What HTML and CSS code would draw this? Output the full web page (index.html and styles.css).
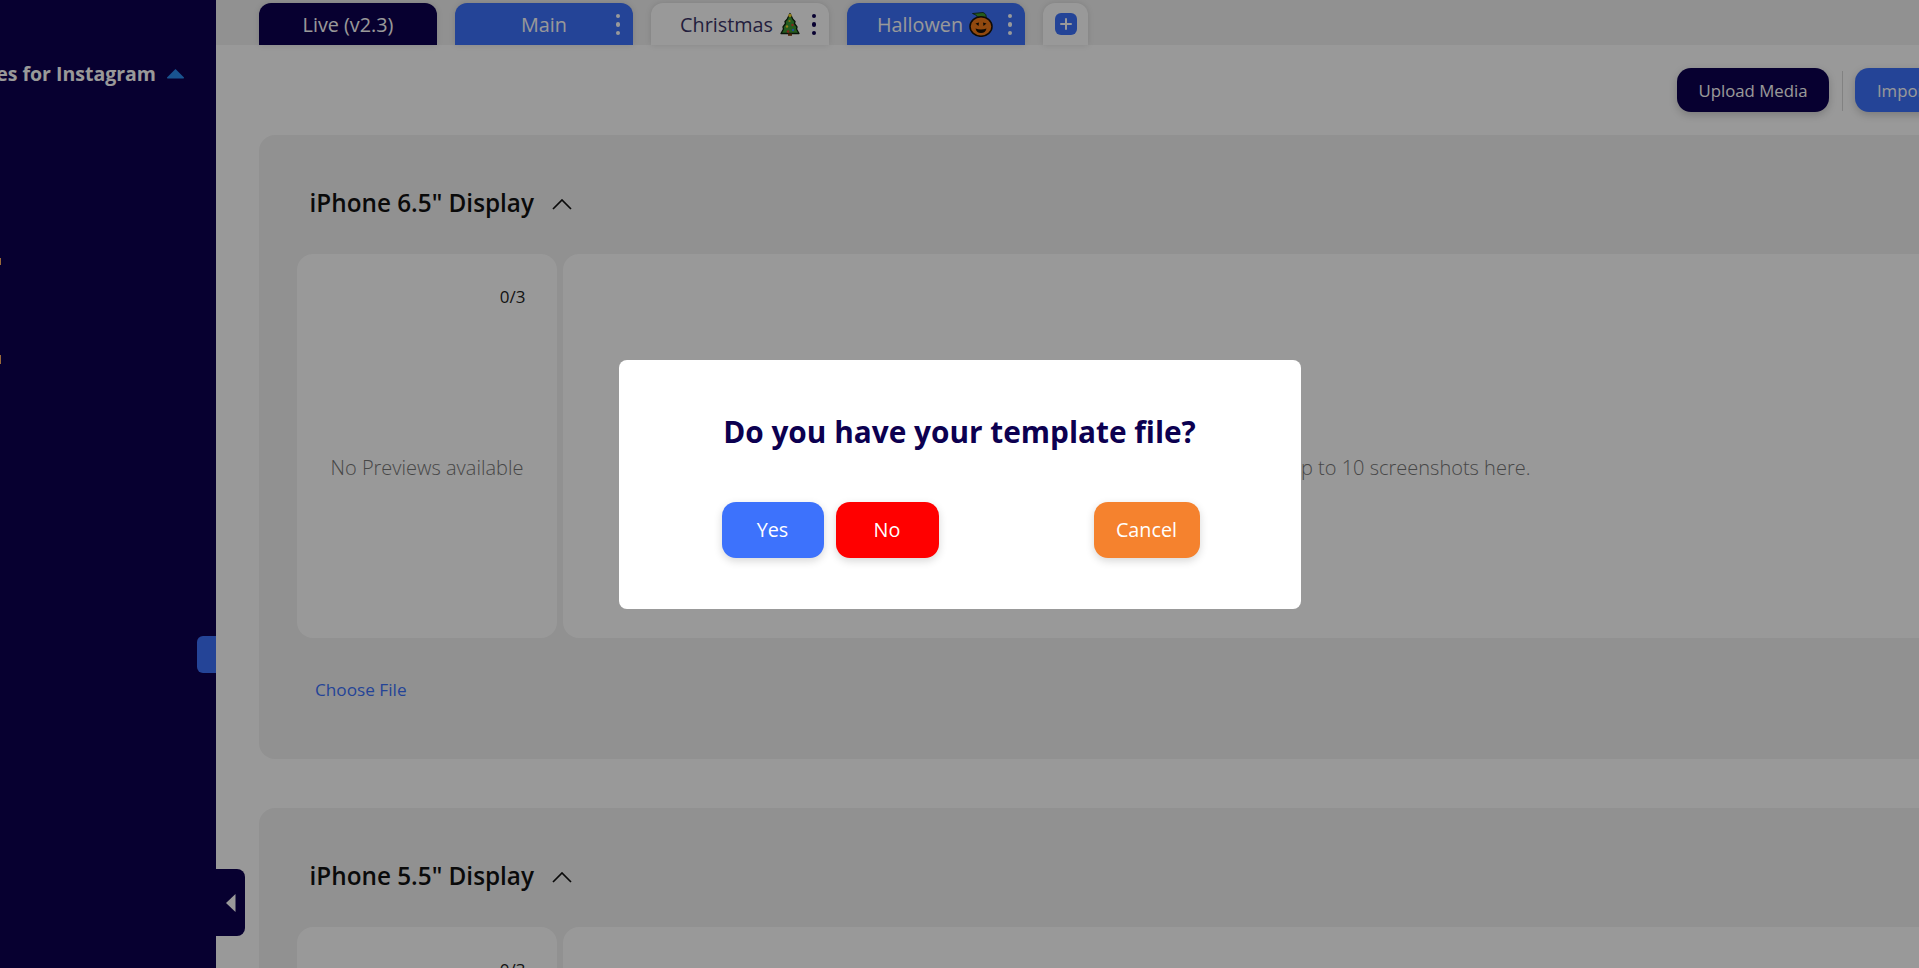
FILE: index.html
```html
<!DOCTYPE html>
<html lang="en">
<head>
<meta charset="utf-8">
<title>Templates for Instagram</title>
<link rel="stylesheet" href="styles.css">
</head>
<body>
<div class="page">
  <aside class="sidebar">
    <div class="side-title">
      <span class="side-title-text">Templates for Instagram</span>
      <svg class="side-caret" width="19" height="11" viewBox="0 0 19 11"><path d="M9.5 1 L18 9.5 Q18.5 10.5 17 10.5 L2 10.5 Q.5 10.5 1 9.5 Z" fill="#2a8cf0"/></svg>
    </div>
    <span class="side-dot side-dot-a"></span>
    <span class="side-dot side-dot-b"></span>
    <span class="side-flag"></span>
  </aside>
  <button class="collapse" aria-label="Collapse">
    <svg width="10" height="18" viewBox="0 0 10 18"><path d="M9.5 0 L0 9 L9.5 18 Z" fill="#fff"/></svg>
  </button>
  <main class="main">
    <nav class="tabs">
      <div class="tab tab-live">Live (v2.3)</div>
      <div class="tab tab-blue">Main<span class="dots"><i></i><i></i><i></i></span></div>
      <div class="tab tab-white">Christmas
        <svg class="emoji" width="20" height="24" viewBox="0 0 20 24"><path d="M10 1.500 L13 7.500 L15 9.500 L14.500 11.500 L17 15 L16.500 17 L19 21.500 L1 21.500 L3.500 17 L3 15 L5.500 11.500 L5 9.500 L7 7.500 Z" fill="#3c9a34" stroke="#10240e" stroke-width="1.300" stroke-linejoin="round"/><rect x="8" y="21.500" width="4" height="2.300" fill="#7a3b12"/><circle cx="10" cy="3.500" r="1.700" fill="#f6d32d"/><circle cx="9.500" cy="9" r="1.100" fill="#e8b32d"/><circle cx="12.500" cy="13" r="1.200" fill="#e03b2c"/><circle cx="7" cy="14.500" r="1.200" fill="#f6d32d"/><circle cx="13" cy="18" r="1.200" fill="#3a7bf0"/><circle cx="8" cy="19.500" r="1.300" fill="#e03b2c"/></svg>
        <span class="dots dots-dark"><i></i><i></i><i></i></span></div>
      <div class="tab tab-blue tab-halloween">Hallowen
        <svg class="emoji" width="24" height="25" viewBox="0 0 24 25"><path d="M9 6 Q8.500 3 3.500 1.500 L14 .5 Q18 2 17 6 Z" fill="#3f9a2e" stroke="#10240e" stroke-width=".8"/><ellipse cx="12" cy="14.500" rx="11" ry="9.800" fill="#f27a1a" stroke="#1a1208" stroke-width="1.500"/><path d="M6.500 11.500 L10 10.500 L9.500 14 Z M17.500 11.500 L14 10.500 L14.500 14 Z" fill="#1a1208"/><path d="M6.500 16.500 Q12 18.500 17.500 16.500 Q16.500 21 12 21 Q7.500 21 6.500 16.500 Z" fill="#1a1208"/></svg>
        <span class="dots"><i></i><i></i><i></i></span></div>
      <div class="tab tab-add"><span class="add-btn"><svg width="12" height="12" viewBox="0 0 12 12"><path d="M6 1 V11 M1 6 H11" stroke="#fff" stroke-width="2" stroke-linecap="round"/></svg></span></div>
    </nav>
    <div class="toolbar">
      <button class="tool tool-navy">Upload Media</button>
      <span class="tool-sep"></span>
      <button class="tool tool-blue">Import Media</button>
    </div>
    <section class="device">
      <header class="device-head">
        <h2>iPhone 6.5" Display</h2>
        <svg width="20" height="11" viewBox="0 0 20 11"><path d="M1 10 L10 1 L19 10" fill="none" stroke="#111" stroke-width="1.700"/></svg>
      </header>
      <div class="device-row">
        <div class="card card-preview"><span class="count">0/3</span><p class="empty">No Previews available</p></div>
        <div class="card card-drop"><p class="empty">Drag and drop up to 10 screenshots here.</p></div>
      </div>
      <a class="choose">Choose File</a>
    </section>
    <section class="device">
      <header class="device-head">
        <h2>iPhone 5.5" Display</h2>
        <svg width="20" height="11" viewBox="0 0 20 11"><path d="M1 10 L10 1 L19 10" fill="none" stroke="#111" stroke-width="1.700"/></svg>
      </header>
      <div class="device-row">
        <div class="card card-preview"><span class="count">0/3</span><p class="empty">No Previews available</p></div>
        <div class="card card-drop"><p class="empty">Drag and drop up to 10 screenshots here.</p></div>
      </div>
      <a class="choose">Choose File</a>
    </section>
  </main>
</div>
<div class="overlay">
  <div class="modal">
    <h1>Do you have your template file?</h1>
    <div class="modal-actions">
      <div class="modal-group">
        <button class="mbtn mbtn-yes">Yes</button>
        <button class="mbtn mbtn-no">No</button>
      </div>
      <button class="mbtn mbtn-cancel">Cancel</button>
    </div>
  </div>
</div>
</body>
</html>
```

FILE: styles.css
```css
* { box-sizing: border-box; }
html, body { margin: 0; height: 100%; overflow: hidden; }
body { font-family: "Open Sans", "Noto Sans", sans-serif; background: #fff; color: #111; }
button { font: inherit; border: 0; cursor: pointer; }

.page { display: flex; width: 2216px; height: 968px; position: relative; overflow: hidden; }

.sidebar { flex: 0 0 216px; height: 968px; background: #0c0050; display: flex; flex-direction: column; overflow: hidden; }
.side-title { height: 30px; margin-top: 58px; padding-right: 31px; display: flex; justify-content: flex-end; align-items: center; gap: 10px; white-space: nowrap; }
.side-title-text { color: #fff; font-size: 19.500px; font-weight: 700; flex: none; }
.side-caret { flex: none; }
.side-dot { width: 1px; background: #ffb060; flex: none; }
.side-dot-a { height: 7px; margin-top: 170px; }
.side-dot-b { height: 9px; margin-top: 90px; }
.side-flag { flex: none; align-self: flex-end; width: 19px; height: 37px; margin-top: 272px; background: #3d72fc; border-radius: 6px 0 0 6px; }

.collapse { position: absolute; left: 216px; top: 869px; z-index: 2; width: 29px; height: 67px; padding: 0 0 0 1px; background: #0c0050; border-radius: 0 8px 8px 0; display: flex; align-items: center; justify-content: center; }

.main { flex: 1; min-width: 0; }

.tabs { height: 45px; padding: 3px 0 0 43px; background: #f2f2f2; display: flex; gap: 18px; }
.tab { position: relative; flex: 0 0 178px; height: 42px; border-radius: 12px 12px 0 0; display: flex; align-items: center; justify-content: center; gap: 7px; font-size: 19.800px; box-shadow: 0 0 6px rgba(0,0,0,.12); }
.tab-live { background: #0c0050; color: #fff; }
.tab-blue { background: #3d72fc; color: #fff; }
.tab-white { background: #fff; color: #3b3468; }
.tab-add { flex-basis: 45px; background: #fff; }
.add-btn { width: 22px; height: 22px; border-radius: 6px; background: #3d72fc; display: flex; align-items: center; justify-content: center; }
.emoji { flex: none; }
.tab-halloween { gap: 6px; padding-right: 2px; }
.dots { position: absolute; right: 13px; top: 10.500px; display: flex; flex-direction: column; gap: 4px; }
.dots i { display: block; width: 4.500px; height: 4.500px; border-radius: 50%; background: #fff; }
.dots-dark i { background: #0c0050; }

.toolbar { height: 90px; padding: 23px 211px 0 0; display: flex; justify-content: flex-end; align-items: flex-start; }
.tool { height: 44px; border-radius: 14px; color: #fff; font-size: 16.800px; box-shadow: 0 3px 8px rgba(0,0,0,.2); }
.tool-navy { width: 152px; background: #0c0050; }
.tool-blue { width: 150px; background: #3d72fc; }
.tool-sep { width: 1px; height: 40px; margin: 3px 12px 0 13px; background: #d9d9d9; }

.device { margin: 0 57px 49px 43px; padding: 0 38px 58px 37.500px; background: #f2f2f2; border-radius: 16px; }
.device-head { height: 119px; padding: 52px 0 0 13px; display: flex; align-items: flex-start; gap: 18px; }
.device-head h2 { margin: 0; font-size: 24.300px; font-weight: 600; line-height: 32px; color: #111; }
.device-head svg { margin-top: 12px; }
.device-row { display: flex; gap: 6px; height: 384px; }
.card { background: #fff; border-radius: 16px; display: flex; flex-direction: column; }
.card-preview { flex: 0 0 260px; padding: 32px 31px 12px 32px; }
.card-drop { flex: 1; padding-top: 42px; }
.count { align-self: flex-end; font-size: 17px; line-height: 22px; color: #222; }
.empty { margin: 0; flex: 1; display: flex; align-items: center; justify-content: center; font-size: 20px; font-weight: 300; color: #777; white-space: nowrap; }
.choose { display: block; margin: 41px 0 0 18.500px; font-size: 17.200px; line-height: 22px; color: #3d72fc; }

.overlay { position: fixed; inset: 0; z-index: 10; background: rgba(0,0,0,.4); display: flex; align-items: center; justify-content: center; }
.modal { width: 682px; height: 249px; padding: 53px 0 0; background: #fff; border-radius: 8px; display: flex; flex-direction: column; align-items: center; }
.modal h1 { margin: 0; font-size: 29.800px; font-weight: 700; line-height: 38px; color: #0c0050; }
.modal-actions { width: 478px; margin: 51px 0 0 2px; display: flex; justify-content: space-between; }
.modal-group { display: flex; gap: 12px; }
.mbtn { height: 56px; border-radius: 14px; color: #fff; font-size: 19.800px; box-shadow: 0 3px 8px rgba(0,0,0,.16); }
.mbtn-yes { width: 102px; background: #3d72fc; }
.mbtn-no { width: 103px; background: #ff0000; }
.mbtn-cancel { width: 106px; background: #f5822e; }
```
